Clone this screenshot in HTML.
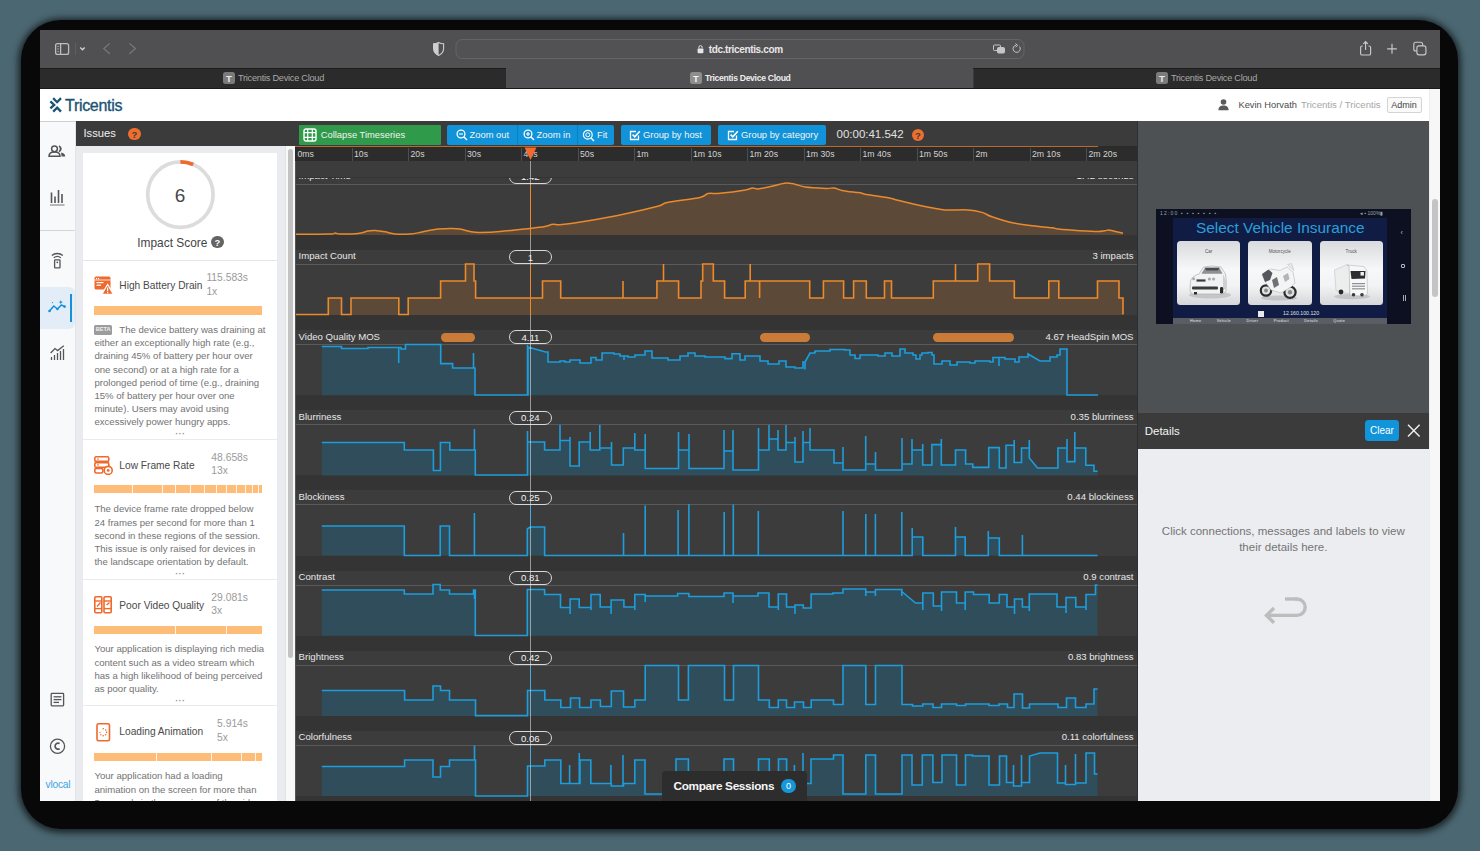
<!DOCTYPE html>
<html><head><meta charset="utf-8">
<style>
*{box-sizing:border-box;margin:0;padding:0}
html,body{width:1480px;height:851px;overflow:hidden}
body{background:#4b6771;position:relative;font-family:"Liberation Sans",sans-serif}
.a{position:absolute}
.t{position:absolute;white-space:nowrap;line-height:1}
#shadow{left:21px;top:20px;width:1437px;height:809px;background:#080808;border-radius:40px;box-shadow:0 1px 6px 3px rgba(0,0,0,.62)}
#win{left:40px;top:30px;width:1400px;height:771px;overflow:hidden;background:#3c3c3c}
</style></head>
<body>
<div id="shadow" class="a"></div>
<div id="win" class="a">
<!-- everything inside uses page coords via wrapper offset -->
<div class="a" style="left:-40px;top:-30px;width:1480px;height:851px">

<!-- browser toolbar -->
<div class="a" style="left:40px;top:30px;width:1400px;height:38px;background:#505052"></div>
<svg class="a" style="left:40px;top:30px" width="1400" height="38" viewBox="40 30 1400 38">
 <g fill="none" stroke="#bdbdbd" stroke-width="1.3">
  <rect x="55.6" y="43.6" width="13" height="10.8" rx="2"/>
  <line x1="60.6" y1="43.8" x2="60.6" y2="54.2"/>
 </g>
 <g stroke="#a8a8a8" stroke-width="0.9"><line x1="57.2" y1="46.4" x2="59" y2="46.4"/><line x1="57.2" y1="49" x2="59" y2="49"/><line x1="57.2" y1="51.6" x2="59" y2="51.6"/></g>
 <line x1="75.5" y1="43" x2="75.5" y2="55" stroke="#5e5e60" stroke-width="1"/>
 <path d="M80.3 47.6 L82.5 49.8 L84.7 47.6" fill="none" stroke="#d0d0d0" stroke-width="1.4"/>
 <path d="M109.8 43.4 L103.8 48.6 L109.8 53.8" fill="none" stroke="#7a7a7c" stroke-width="1.2"/>
 <path d="M129.4 43.4 L135.4 48.6 L129.4 53.8" fill="none" stroke="#7a7a7c" stroke-width="1.2"/>
 <path d="M438.6 42.5 C436.5 43.6 435 43.8 433.6 43.8 L433.6 48.5 C433.6 52 436 54.2 438.6 55.4 C441.2 54.2 443.6 52 443.6 48.5 L443.6 43.8 C442.2 43.8 440.7 43.6 438.6 42.5 Z" fill="none" stroke="#cfcfcf" stroke-width="1.1"/>
 <path d="M438.6 42.5 C436.5 43.6 435 43.8 433.6 43.8 L433.6 48.5 C433.6 52 436 54.2 438.6 55.4 Z" fill="#cfcfcf"/>
 <rect x="456" y="39.5" width="568" height="19" rx="6" fill="#525254" stroke="#69696b" stroke-width="0.8"/>
 <rect x="697.6" y="48.4" width="5.8" height="4.8" rx="0.8" fill="#e6e6e6"/>
 <path d="M698.9 48.4 V47.2 A1.6 1.6 0 0 1 702.1 47.2 V48.4" fill="none" stroke="#e6e6e6" stroke-width="1"/>
 <g fill="none" stroke="#c6c6c6" stroke-width="1">
  <rect x="993.5" y="45" width="7" height="5.5" rx="1"/>
  <rect x="997.5" y="47.5" width="7" height="5.5" rx="1" fill="#c6c6c6"/>
  <path d="M1019.5 46.5 A3.6 3.6 0 1 1 1016 45.2"/>
 </g>
 <path d="M1015.5 43.6 L1017.6 45.3 L1015.6 47" fill="none" stroke="#c6c6c6" stroke-width="1"/>
 <g fill="none" stroke="#c9c9c9" stroke-width="1.15">
  <path d="M1362.8 46 H1362.2 A1.6 1.6 0 0 0 1360.6 47.6 V53.4 A1.6 1.6 0 0 0 1362.2 55 H1369 A1.6 1.6 0 0 0 1370.6 53.4 V47.6 A1.6 1.6 0 0 0 1369 46 H1368.4"/>
  <path d="M1365.6 50 V41.8 M1363.4 44 L1365.6 41.6 L1367.8 44"/>
  <path d="M1392 43.8 V53.8 M1387.2 48.8 H1396.8"/>
  <rect x="1413.8" y="42.2" width="8.8" height="8.8" rx="2"/>
  <rect x="1416.9" y="45.8" width="9" height="9" rx="2" fill="#505052"/>
 </g>
</svg>
<div class="t" style="left:708.7px;top:44.6px;font-size:10px;letter-spacing:-0.35px;font-weight:bold;color:#e8e8e8">tdc.tricentis.com</div>
<!-- tab bar -->
<div class="a" style="left:40px;top:68px;width:1400px;height:21px;background:#2b2b2b;border-top:1px solid #1c1c1c;border-bottom:1px solid #1a1a1a"></div>
<div class="a" style="left:506px;top:68px;width:467px;height:20px;background:#505052"></div>
<div class="a" style="left:973px;top:69px;width:1px;height:19px;background:#3a3a3a"></div>
<div class="a" style="left:223px;top:72px;width:12px;height:12px;border-radius:2.5px;background:#7b7b7b"></div>
<div class="t" style="left:223px;top:74px;width:12px;text-align:center;font-size:9.5px;font-weight:bold;color:#eaeaea">T</div>
<div class="t" style="left:238px;top:74.2px;font-size:9.2px;letter-spacing:-0.25px;color:#a8a8a8">Tricentis Device Cloud</div>
<div class="a" style="left:690px;top:72px;width:12px;height:12px;border-radius:2.5px;background:#8e8e8e"></div>
<div class="t" style="left:690px;top:74px;width:12px;text-align:center;font-size:9.5px;font-weight:bold;color:#f2f2f2">T</div>
<div class="t" style="left:705px;top:74.2px;font-size:8.6px;letter-spacing:-0.3px;font-weight:bold;color:#ededed">Tricentis Device Cloud</div>
<div class="a" style="left:1156px;top:72px;width:12px;height:12px;border-radius:2.5px;background:#7b7b7b"></div>
<div class="t" style="left:1156px;top:74px;width:12px;text-align:center;font-size:9.5px;font-weight:bold;color:#eaeaea">T</div>
<div class="t" style="left:1171px;top:74.2px;font-size:9.2px;letter-spacing:-0.25px;color:#a8a8a8">Tricentis Device Cloud</div>


<!-- app header -->
<div class="a" style="left:40px;top:89px;width:1389px;height:32px;background:#ffffff"></div>
<div class="a" style="left:1429px;top:89px;width:11px;height:712px;background:#f7f7f8;border-left:1px solid #ececec"></div>
<div class="a" style="left:1432px;top:199px;width:6px;height:98px;border-radius:3px;background:#c4c4c6"></div>
<svg class="a" style="left:48px;top:96px" width="16" height="18" viewBox="0 0 16 18">
 <g fill="none" stroke="#1a5373" stroke-width="2.3" stroke-linecap="square" stroke-linejoin="miter">
 <path d="M6 3 L9.1 6.2 L12.2 3"/>
 <path d="M3.2 6.2 L6.2 8.9 L3.2 11.6"/>
 <path d="M6 14.8 L9.1 11.6 L12.2 14.8"/>
 </g>
</svg>
<div class="t" style="left:65px;top:97.5px;font-size:16px;color:#1a5373;letter-spacing:-0.3px;-webkit-text-stroke:0.35px #1a5373">Tricentis</div>
<svg class="a" style="left:1218px;top:99px" width="11" height="12" viewBox="0 0 11 12">
 <circle cx="5.5" cy="3" r="2.8" fill="#5a5a5a"/>
 <path d="M0.4 11.2 C0.4 7.6 2.6 6.4 5.5 6.4 C8.4 6.4 10.6 7.6 10.6 11.2 Z" fill="#5a5a5a"/>
</svg>
<div class="t" style="left:1238.5px;top:100.9px;font-size:9.3px;color:#4a4a4a">Kevin Horvath</div>
<div class="t" style="left:1301px;top:100px;font-size:9.6px;color:#a6a6a6">Tricentis / Tricentis</div>
<div class="a" style="left:1386.5px;top:96.5px;width:35px;height:16px;border:1px solid #d4d4d4;border-radius:2px;background:#fafafa"></div>
<div class="t" style="left:1386.5px;top:100.6px;width:35px;text-align:center;font-size:9.0px;color:#444">Admin</div>


<!-- left nav sidebar -->
<div class="a" style="left:40px;top:121px;width:36px;height:680px;background:#f8f9fa;border-right:1px solid #e4e5e8"></div>
<div class="a" style="left:40px;top:230px;width:35px;height:1px;background:#d3d5d8"></div>
<div class="a" style="left:40px;top:121px;width:36px;height:1px;background:#cfd0d2"></div>
<div class="a" style="left:40px;top:287px;width:34.5px;height:42px;border-radius:0 6px 6px 0;background:#e2edf8"></div>
<div class="a" style="left:70px;top:294px;width:2px;height:28px;background:#1790dc"></div>
<svg class="a" style="left:40px;top:121px" width="36" height="680" viewBox="40 121 36 680">
 <g fill="none" stroke="#555" stroke-width="1.5">
  <circle cx="54.5" cy="148.8" r="2.9"/>
  <path d="M49 156.2 C49 153.2 51.2 152 54.5 152 C57.8 152 60 153.2 60 156.2 Z"/>
 </g>
 <path d="M59 146 A2.9 2.9 0 0 1 59 151.6 A3.6 3.6 0 0 0 59 146 Z" fill="#555" stroke="#555" stroke-width="1.2"/>
 <path d="M61 152.4 C63.6 152.8 65.2 154 65.2 156.4 L61.6 156.4 Z" fill="#555"/>
 <g stroke="#555" stroke-width="1.6">
  <line x1="51.5" y1="192.5" x2="51.5" y2="203"/>
  <line x1="55" y1="196.5" x2="55" y2="203"/>
  <line x1="58.5" y1="190" x2="58.5" y2="203"/>
  <line x1="62" y1="194" x2="62" y2="203"/>
 </g>
 <line x1="50" y1="205" x2="64.5" y2="205" stroke="#777" stroke-width="1"/>
 <g fill="none" stroke="#555" stroke-width="1.3">
  <path d="M51.8 255.6 A8.2 8.2 0 0 1 62.8 255.6"/>
  <path d="M53.8 257.8 A5.4 5.4 0 0 1 60.8 257.8"/>
  <rect x="54.6" y="259.8" width="5.4" height="8" rx="0.6"/>
 </g>
 <circle cx="57.3" cy="262.3" r="0.9" fill="#555"/>
 <g fill="none" stroke="#1a8fde" stroke-width="1.6" stroke-linejoin="round">
  <path d="M49.5 311 L53.8 306 L57.4 309 L61.4 305 L64.6 306.6"/>
 </g>
 <g fill="#1a8fde">
  <circle cx="49.5" cy="311" r="1.3"/><circle cx="57.4" cy="309" r="1.3"/><circle cx="64.6" cy="306.6" r="1.3"/>
  <path d="M60.8 300 l0.6 1.6 l1.6 0.6 l-1.6 0.6 l-0.6 1.6 l-0.6 -1.6 l-1.6 -0.6 l1.6 -0.6 Z"/>
  <circle cx="52.5" cy="302.6" r="0.7"/>
 </g>
 <g stroke="#555" stroke-width="1.3">
  <line x1="51.5" y1="357" x2="51.5" y2="360"/>
  <line x1="54.5" y1="355" x2="54.5" y2="360"/>
  <line x1="57.5" y1="353" x2="57.5" y2="360"/>
  <line x1="60.5" y1="351" x2="60.5" y2="360"/>
  <line x1="63.5" y1="349" x2="63.5" y2="360"/>
 </g>
 <path d="M50.6 353 L55 348.6 L57.6 350.6 L63.8 345.8" fill="none" stroke="#555" stroke-width="1.3"/>
 <g fill="none" stroke="#555" stroke-width="1.3">
  <rect x="51.2" y="693.4" width="12.4" height="12.4" rx="0.8"/>
  <line x1="53.6" y1="696.8" x2="61.4" y2="696.8"/>
  <line x1="53.6" y1="699.6" x2="61.4" y2="699.6"/>
  <line x1="53.6" y1="702.4" x2="59" y2="702.4"/>
  <circle cx="57.5" cy="746.2" r="7.1"/>
 </g>
 <path d="M59.6 743.6 A3 3 0 1 0 59.6 748.8" fill="none" stroke="#555" stroke-width="1.7"/>
</svg>
<div class="t" style="left:45.5px;top:779.5px;font-size:10.2px;color:#3ba3e4;letter-spacing:-0.2px">vlocal</div>

<!-- issues panel -->
<div class="a" style="left:76px;top:121px;width:1062px;height:25.5px;background:#3b3b3b"></div>
<div class="t" style="left:83.5px;top:128px;font-size:11.2px;color:#f0f0f0">Issues</div>
<div class="a" style="left:128.2px;top:127.5px;width:12.6px;height:12.6px;border-radius:50%;background:#ee6f2d"></div>
<div class="t" style="left:128.2px;top:129.6px;width:12.6px;text-align:center;font-size:9.4px;font-weight:bold;color:#3b3b3b">?</div>
<div class="a" style="left:76px;top:146px;width:219px;height:655px;background:#e9ebef"></div>
<div class="a" style="left:284.5px;top:146px;width:10.5px;height:655px;background:#f8f8f8;border-left:1px solid #e2e2e2"></div>
<div class="a" style="left:287.5px;top:148.5px;width:5px;height:509px;border-radius:2.5px;background:#c3c3c3"></div>
<div class="a" style="left:83.4px;top:153px;width:193.6px;height:648px;background:#ffffff"></div>
<svg class="a" style="left:140px;top:154px" width="80" height="80" viewBox="140 154 80 80">
 <circle cx="180.4" cy="194.6" r="32.7" fill="none" stroke="#dcdcdc" stroke-width="3.7"/>
 <path d="M180.4 161.9 A32.7 32.7 0 0 1 193.2 164.5" fill="none" stroke="#ef6a2c" stroke-width="3.9"/>
</svg>
<div class="t" style="left:160px;top:185.5px;width:40px;text-align:center;font-size:19px;color:#474747">6</div>
<div class="t" style="left:137.3px;top:237.6px;font-size:11.9px;color:#444">Impact Score</div>
<div class="a" style="left:211px;top:235.8px;width:12.6px;height:12.6px;border-radius:50%;background:#646464"></div>
<div class="t" style="left:211px;top:238px;width:12.6px;text-align:center;font-size:9.4px;font-weight:bold;color:#fff">?</div>
<div class="a" style="left:83.4px;top:259.5px;width:193.6px;height:1px;background:#e3e6ea"></div>
<svg class="a" style="left:94.4px;top:275.5px" width="20" height="19" viewBox="0 0 20 19"><rect x="0.5" y="0.5" width="16" height="13" rx="1.6" fill="#ee6a2c"/><rect x="2" y="2" width="1.2" height="1.2" fill="#fff"/><rect x="4" y="2" width="1.2" height="1.2" fill="#fff"/>
 <rect x="0.5" y="3.6" width="16" height="0.8" fill="#fff"/><rect x="2.5" y="6" width="7" height="1.2" fill="#fff"/><rect x="2.5" y="8.6" width="4.5" height="1.2" fill="#fff"/>
 <path d="M13.6 8.4 L19.4 18.4 L7.8 18.4 Z" fill="#ee6a2c" stroke="#fff" stroke-width="1.2"/><rect x="13" y="11.6" width="1.2" height="3.6" fill="#fff"/><rect x="13" y="16" width="1.2" height="1.2" fill="#fff"/></svg>
<div class="t" style="left:119.3px;top:281.1px;font-size:10.2px;color:#4a4a4a;">High Battery Drain</div>
<div class="a" style="left:150px;top:271.2px;width:98px;text-align:right;line-height:1"><div style="display:inline-block;text-align:left;font-size:10.3px;color:#9a9a9a;line-height:13.6px">115.583s<br>1x</div></div>
<div class="a" style="left:94.4px;top:305.5px;width:167.3px;height:9.1px;background:#fdbc78"></div>
<div class="a" style="left:94.4px;top:325.2px;width:17.6px;height:9.4px;border-radius:1.5px;background:#9c9c9c"></div>
<div class="t" style="left:94.4px;top:327.0px;width:17.6px;text-align:center;font-size:5.6px;font-weight:bold;color:#eee">BETA</div>
<div class="t" style="left:119.3px;top:325.0px;font-size:9.6px;color:#737373;">The device battery was draining at</div>
<div class="t" style="left:94.4px;top:338.2px;font-size:9.6px;color:#737373;">either an exceptionally high rate (e.g.,</div>
<div class="t" style="left:94.4px;top:351.3px;font-size:9.6px;color:#737373;">draining 45% of battery per hour over</div>
<div class="t" style="left:94.4px;top:364.5px;font-size:9.6px;color:#737373;">one second) or at a high rate for a</div>
<div class="t" style="left:94.4px;top:377.6px;font-size:9.6px;color:#737373;">prolonged period of time (e.g., draining</div>
<div class="t" style="left:94.4px;top:390.8px;font-size:9.6px;color:#737373;">15% of battery per hour over one</div>
<div class="t" style="left:94.4px;top:403.9px;font-size:9.6px;color:#737373;">minute). Users may avoid using</div>
<div class="t" style="left:94.4px;top:417.1px;font-size:9.6px;color:#737373;">excessively power hungry apps.</div>
<div class="t" style="left:175.2px;top:430.0px;font-size:9.0px;color:#9a9a9a;font-weight:bold;letter-spacing:0.4px">&middot;&middot;&middot;</div>
<div class="a" style="left:83.4px;top:438.5px;width:193.6px;height:1px;background:#e8eaee"></div>
<svg class="a" style="left:94.4px;top:455.5px" width="20" height="19" viewBox="0 0 20 19"><rect x="0.8" y="0.8" width="14" height="4.6" rx="1.4" fill="none" stroke="#ee6a2c" stroke-width="1.6"/><rect x="0.8" y="6.6" width="14" height="4.6" rx="1.4" fill="none" stroke="#ee6a2c" stroke-width="1.6"/><rect x="0.8" y="12.4" width="8" height="4.6" rx="1.4" fill="none" stroke="#ee6a2c" stroke-width="1.6"/>
 <rect x="3" y="2.6" width="2" height="1" fill="#ee6a2c"/><rect x="3" y="8.4" width="2" height="1" fill="#ee6a2c"/><circle cx="14.2" cy="14.4" r="4" fill="#fff" stroke="#ee6a2c" stroke-width="1.6"/><circle cx="14.2" cy="14.4" r="1.4" fill="#ee6a2c"/></svg>
<div class="t" style="left:119.3px;top:461.1px;font-size:10.2px;color:#4a4a4a;">Low Frame Rate</div>
<div class="a" style="left:150px;top:450.7px;width:98px;text-align:right;line-height:1"><div style="display:inline-block;text-align:left;font-size:10.3px;color:#9a9a9a;line-height:13.6px">48.658s<br>13x</div></div>
<div class="a" style="left:94.4px;top:485.4px;width:167.3px;height:8.1px;background:#fdbc78"></div>
<div class="a" style="left:132.0px;top:485.4px;width:1px;height:8.1px;background:#fff3e6"></div>
<div class="a" style="left:161.7px;top:485.4px;width:1px;height:8.1px;background:#fff3e6"></div>
<div class="a" style="left:175.4px;top:485.4px;width:1px;height:8.1px;background:#fff3e6"></div>
<div class="a" style="left:190.2px;top:485.4px;width:1px;height:8.1px;background:#fff3e6"></div>
<div class="a" style="left:204.0px;top:485.4px;width:1px;height:8.1px;background:#fff3e6"></div>
<div class="a" style="left:216.0px;top:485.4px;width:1px;height:8.1px;background:#fff3e6"></div>
<div class="a" style="left:226.2px;top:485.4px;width:1px;height:8.1px;background:#fff3e6"></div>
<div class="a" style="left:235.7px;top:485.4px;width:1px;height:8.1px;background:#fff3e6"></div>
<div class="a" style="left:244.8px;top:485.4px;width:1px;height:8.1px;background:#fff3e6"></div>
<div class="a" style="left:251.6px;top:485.4px;width:1px;height:8.1px;background:#fff3e6"></div>
<div class="a" style="left:258.4px;top:485.4px;width:1px;height:8.1px;background:#fff3e6"></div>
<div class="t" style="left:94.4px;top:504.3px;font-size:9.6px;color:#737373;">The device frame rate dropped below</div>
<div class="t" style="left:94.4px;top:517.5px;font-size:9.6px;color:#737373;">24 frames per second for more than 1</div>
<div class="t" style="left:94.4px;top:530.6px;font-size:9.6px;color:#737373;">second in these regions of the session.</div>
<div class="t" style="left:94.4px;top:543.8px;font-size:9.6px;color:#737373;">This issue is only raised for devices in</div>
<div class="t" style="left:94.4px;top:556.9px;font-size:9.6px;color:#737373;">the landscape orientation by default.</div>
<div class="t" style="left:175.2px;top:570.3px;font-size:9.0px;color:#9a9a9a;font-weight:bold;letter-spacing:0.4px">&middot;&middot;&middot;</div>
<div class="a" style="left:83.4px;top:578.7px;width:193.6px;height:1px;background:#e8eaee"></div>
<svg class="a" style="left:94.4px;top:596.0px" width="20" height="19" viewBox="0 0 20 19"><rect x="0.8" y="0.8" width="7" height="16" rx="1" fill="none" stroke="#ee6a2c" stroke-width="1.6"/><rect x="10" y="0.8" width="7.2" height="16" rx="1" fill="none" stroke="#ee6a2c" stroke-width="1.6"/>
 <line x1="0.8" y1="5" x2="7.8" y2="5" stroke="#ee6a2c" stroke-width="1.4"/><line x1="0.8" y1="12.6" x2="7.8" y2="12.6" stroke="#ee6a2c" stroke-width="1.4"/><line x1="10" y1="5" x2="17.2" y2="5" stroke="#ee6a2c" stroke-width="1.4"/><line x1="10" y1="12.6" x2="17.2" y2="12.6" stroke="#ee6a2c" stroke-width="1.4"/>
 <path d="M3 10.5 L6.5 6.5 M12.5 9 L15.5 6.5" stroke="#ee6a2c" stroke-width="1.4"/></svg>
<div class="t" style="left:119.3px;top:600.7px;font-size:10.2px;color:#4a4a4a;">Poor Video Quality</div>
<div class="a" style="left:150px;top:590.9px;width:98px;text-align:right;line-height:1"><div style="display:inline-block;text-align:left;font-size:10.3px;color:#9a9a9a;line-height:13.6px">29.081s<br>3x</div></div>
<div class="a" style="left:94.4px;top:625.5px;width:167.3px;height:8.2px;background:#fdbc78"></div>
<div class="a" style="left:175.2px;top:625.5px;width:1px;height:8.2px;background:#fff3e6"></div>
<div class="a" style="left:226.3px;top:625.5px;width:1px;height:8.2px;background:#fff3e6"></div>
<div class="t" style="left:94.4px;top:644.4px;font-size:9.6px;color:#737373;">Your application is displaying rich media</div>
<div class="t" style="left:94.4px;top:657.6px;font-size:9.6px;color:#737373;">content such as a video stream which</div>
<div class="t" style="left:94.4px;top:670.7px;font-size:9.6px;color:#737373;">has a high likelihood of being perceived</div>
<div class="t" style="left:94.4px;top:683.9px;font-size:9.6px;color:#737373;">as poor quality.</div>
<div class="t" style="left:175.2px;top:696.9px;font-size:9.0px;color:#9a9a9a;font-weight:bold;letter-spacing:0.4px">&middot;&middot;&middot;</div>
<div class="a" style="left:83.4px;top:705.0px;width:193.6px;height:1px;background:#e8eaee"></div>
<svg class="a" style="left:96.0px;top:722.5px" width="20" height="19" viewBox="0 0 20 19"><rect x="1" y="0.8" width="12.5" height="17" rx="1.6" fill="none" stroke="#ee6a2c" stroke-width="1.6"/>
 <g fill="#ee6a2c"><circle cx="7.2" cy="5.8" r="0.8"/><circle cx="9.8" cy="7" r="0.8"/><circle cx="10.6" cy="9.4" r="0.8"/><circle cx="9.6" cy="11.8" r="0.8"/><circle cx="7.2" cy="12.8" r="0.8"/><circle cx="4.8" cy="11.8" r="0.7"/><circle cx="3.9" cy="9.4" r="0.6"/></g></svg>
<div class="t" style="left:119.3px;top:727.4px;font-size:10.2px;color:#4a4a4a;">Loading Animation</div>
<div class="a" style="left:150px;top:717.2px;width:98px;text-align:right;line-height:1"><div style="display:inline-block;text-align:left;font-size:10.3px;color:#9a9a9a;line-height:13.6px">5.914s<br>5x</div></div>
<div class="a" style="left:94.4px;top:752.5px;width:167.3px;height:8.5px;background:#fdbc78"></div>
<div class="a" style="left:156.2px;top:752.5px;width:1px;height:8.5px;background:#fff3e6"></div>
<div class="a" style="left:211.4px;top:752.5px;width:1px;height:8.5px;background:#fff3e6"></div>
<div class="a" style="left:240.5px;top:752.5px;width:1px;height:8.5px;background:#fff3e6"></div>
<div class="a" style="left:254.6px;top:752.5px;width:1px;height:8.5px;background:#fff3e6"></div>
<div class="t" style="left:94.4px;top:771.4px;font-size:9.6px;color:#737373;">Your application had a loading</div>
<div class="t" style="left:94.4px;top:784.6px;font-size:9.6px;color:#737373;">animation on the screen for more than</div>
<div class="t" style="left:94.4px;top:797.7px;font-size:9.6px;color:#737373;">5 seconds in these regions of the video.</div>


<div class="a" style="left:299px;top:125.2px;width:142px;height:19.6px;border-radius:1px;background:#2f9a49"></div>
<svg class="a" style="left:303px;top:128px" width="14" height="14" viewBox="0 0 14 14"><rect x="1" y="1" width="12" height="12" rx="2" fill="none" stroke="#fff" stroke-width="1.4"/><path d="M4.7 1 V13 M9.3 1 V13 M1 4.7 H13 M1 9.3 H13" stroke="#fff" stroke-width="1.2"/></svg>
<div class="t" style="left:320.7px;top:130.3px;font-size:9.4px;color:#f2f2f2;">Collapse Timeseries</div>
<div class="a" style="left:446.8px;top:125.2px;width:167.2px;height:19.6px;border-radius:2px;background:#1093d8"></div>
<div class="a" style="left:516.5px;top:125.2px;width:1px;height:19.6px;background:#0d7fbd"></div>
<div class="a" style="left:576.6px;top:125.2px;width:1px;height:19.6px;background:#0d7fbd"></div>
<svg class="a" style="left:455.5px;top:129px" width="12" height="12" viewBox="0 0 12 12"><circle cx="5" cy="5" r="3.9" fill="none" stroke="#fff" stroke-width="1.3"/><path d="M7.8 7.8 L11 11" stroke="#fff" stroke-width="1.5"/><path d="M3 5 H7" stroke="#fff" stroke-width="1.1"/></svg>
<div class="t" style="left:469.5px;top:130.3px;font-size:9.4px;color:#f4f4f4;">Zoom out</div>
<svg class="a" style="left:522.5px;top:129px" width="12" height="12" viewBox="0 0 12 12"><circle cx="5" cy="5" r="3.9" fill="none" stroke="#fff" stroke-width="1.3"/><path d="M7.8 7.8 L11 11" stroke="#fff" stroke-width="1.5"/><path d="M3 5 H7 M5 3 V7" stroke="#fff" stroke-width="1.1"/></svg>
<div class="t" style="left:536.5px;top:130.3px;font-size:9.4px;color:#f4f4f4;">Zoom in</div>
<svg class="a" style="left:582px;top:128.5px" width="13" height="13" viewBox="0 0 13 13"><circle cx="5.8" cy="5.8" r="4.4" fill="none" stroke="#fff" stroke-width="1.2"/><circle cx="5.8" cy="5.8" r="2" fill="none" stroke="#fff" stroke-width="1"/><path d="M9 9 L12 12" stroke="#fff" stroke-width="1.4"/></svg>
<div class="t" style="left:597.0px;top:130.3px;font-size:9.4px;color:#f4f4f4;">Fit</div>
<div class="a" style="left:620.6px;top:125.2px;width:90.4px;height:19.6px;border-radius:2px;background:#1093d8"></div>
<svg class="a" style="left:628.5px;top:129px" width="12" height="12" viewBox="0 0 12 12"><path d="M9.5 6.5 V10.5 H1.5 V2.5 H7" fill="none" stroke="#fff" stroke-width="1.3"/><path d="M3.6 5.6 L5.8 7.8 L10.8 2.2" fill="none" stroke="#fff" stroke-width="1.6"/></svg>
<div class="t" style="left:643.0px;top:130.3px;font-size:9.4px;color:#f4f4f4;">Group by host</div>
<div class="a" style="left:718.2px;top:125.2px;width:108.3px;height:19.6px;border-radius:2px;background:#1093d8"></div>
<svg class="a" style="left:726.5px;top:129px" width="12" height="12" viewBox="0 0 12 12"><path d="M9.5 6.5 V10.5 H1.5 V2.5 H7" fill="none" stroke="#fff" stroke-width="1.3"/><path d="M3.6 5.6 L5.8 7.8 L10.8 2.2" fill="none" stroke="#fff" stroke-width="1.6"/></svg>
<div class="t" style="left:741.0px;top:130.3px;font-size:9.4px;color:#f4f4f4;">Group by category</div>
<div class="t" style="left:836.5px;top:129.3px;font-size:11.5px;color:#e2e2e2;">00:00:41.542</div>
<div class="a" style="left:911.7px;top:128.6px;width:12.6px;height:12.6px;border-radius:50%;background:#ee6f2d"></div>
<div class="t" style="left:911.7px;top:130.7px;width:12.6px;text-align:center;font-size:9.4px;font-weight:bold;color:#3b3b3b">?</div>
<div class="a" style="left:295px;top:146px;width:843px;height:655px;background:#3c3c3c"></div>
<div class="a" style="left:295px;top:234.9px;width:843px;height:15.0px;background:#343434"></div>
<div class="a" style="left:295px;top:315.1px;width:843px;height:15.0px;background:#343434"></div>
<div class="a" style="left:295px;top:395.2px;width:843px;height:15.0px;background:#343434"></div>
<div class="a" style="left:295px;top:475.4px;width:843px;height:15.0px;background:#343434"></div>
<div class="a" style="left:295px;top:555.6px;width:843px;height:15.0px;background:#343434"></div>
<div class="a" style="left:295px;top:635.8px;width:843px;height:15.0px;background:#343434"></div>
<div class="a" style="left:295px;top:715.9px;width:843px;height:15.0px;background:#343434"></div>
<div class="a" style="left:295px;top:796.1px;width:843px;height:15.0px;background:#343434"></div>
<div class="a" style="left:295px;top:183.7px;width:843px;height:1px;background:#5a5a5a"></div>
<div class="a" style="left:295px;top:263.9px;width:843px;height:1px;background:#5a5a5a"></div>
<div class="a" style="left:295px;top:344.0px;width:843px;height:1px;background:#5a5a5a"></div>
<div class="a" style="left:295px;top:424.2px;width:843px;height:1px;background:#5a5a5a"></div>
<div class="a" style="left:295px;top:504.4px;width:843px;height:1px;background:#5a5a5a"></div>
<div class="a" style="left:295px;top:584.5px;width:843px;height:1px;background:#5a5a5a"></div>
<div class="a" style="left:295px;top:664.7px;width:843px;height:1px;background:#5a5a5a"></div>
<div class="a" style="left:295px;top:744.9px;width:843px;height:1px;background:#5a5a5a"></div>
<svg class="a" style="left:295px;top:146px" width="843" height="655" viewBox="295 146 843 655">
<path d="M295 234.2 C300.8 234.2 323.3 234.2 330 234 C336.7 233.8 333.3 233 335 233 C336.7 233 336.2 233.9 340 234 C343.8 234.1 353.3 234 358 233.5 C362.7 233 365.2 231.5 368 231 C370.8 230.5 372.2 230.4 375 230.5 C377.8 230.6 381.7 231.2 385 231.8 C388.3 232.4 390.8 233.6 395 234 C399.2 234.4 405.5 234.3 410 234 C414.5 233.7 417.8 232.8 422 232 C426.2 231.2 430.3 230 435 229.4 C439.7 228.8 445.8 228.6 450 228.5 C454.2 228.4 456.5 228.4 460 229 C463.5 229.6 467.7 231.2 471 231.8 C474.3 232.4 475.2 232.6 480 232.5 C484.8 232.4 491.7 232.2 500 231.5 C508.3 230.8 522.5 229.2 530 228.4 C537.5 227.6 541.2 227.2 545 226.5 C548.8 225.8 550.2 224.5 553 224.2 C555.8 223.9 555.8 225.2 562 224.6 C568.2 224 580.3 222.1 590 220.5 C599.7 218.9 608.7 217.4 620 215 C631.3 212.6 649.9 208.4 657.8 206.3 C665.7 204.2 660.3 204 667.3 202.5 C674.3 201 693.2 198.9 700 197.4 C706.8 195.9 704.7 194.3 708 193.6 C711.3 192.9 713.8 193.9 720 193.3 C726.2 192.7 740.1 190.8 745.5 189.9 C750.9 189 750.3 188.2 752.4 188 C754.5 187.8 754.9 189.1 758 188.9 C761.1 188.7 766.4 187.6 770.8 186.6 C775.2 185.6 780.6 183.6 784.6 183.2 C788.6 182.8 791.5 183.6 795 184.2 C798.5 184.8 800.2 186.3 805.4 187 C810.6 187.7 821.3 188.2 826 188.4 C830.7 188.6 831.1 187.7 833.8 188 C836.5 188.3 838.5 189.7 842 190.4 C845.5 191.1 852 191.9 855 192.3 C858 192.7 858.6 192.4 860.3 192.7 C862 193 861.7 193.5 865 194.2 C868.3 194.8 876.3 196 880 196.6 C883.7 197.2 882.8 196.7 887 197.6 C891.2 198.5 897.8 200.3 905 202 C912.2 203.7 923.3 206.2 930 207.5 C936.7 208.8 938.7 209.5 945 209.9 C951.3 210.3 961.8 209.5 968 209.9 C974.2 210.3 978 211.2 982 212.4 C986 213.6 987.3 215.2 992 216.8 C996.7 218.4 1003.7 220.7 1010 222.2 C1016.3 223.7 1023 224.7 1030 225.6 C1037 226.5 1047.3 227.2 1052 227.8 C1056.7 228.4 1053.3 228.5 1058 229 C1062.7 229.5 1073.3 230.3 1080 230.7 C1086.7 231.1 1093.8 231.5 1098 231.5 C1102.2 231.5 1103 230.9 1105 230.7 C1107 230.5 1107 229.8 1110 230.2 C1113 230.6 1120.8 232.7 1123 233.2 L1123 234.9 L295 234.9 Z" fill="#5d4938"/><path d="M295 234.2 C300.8 234.2 323.3 234.2 330 234 C336.7 233.8 333.3 233 335 233 C336.7 233 336.2 233.9 340 234 C343.8 234.1 353.3 234 358 233.5 C362.7 233 365.2 231.5 368 231 C370.8 230.5 372.2 230.4 375 230.5 C377.8 230.6 381.7 231.2 385 231.8 C388.3 232.4 390.8 233.6 395 234 C399.2 234.4 405.5 234.3 410 234 C414.5 233.7 417.8 232.8 422 232 C426.2 231.2 430.3 230 435 229.4 C439.7 228.8 445.8 228.6 450 228.5 C454.2 228.4 456.5 228.4 460 229 C463.5 229.6 467.7 231.2 471 231.8 C474.3 232.4 475.2 232.6 480 232.5 C484.8 232.4 491.7 232.2 500 231.5 C508.3 230.8 522.5 229.2 530 228.4 C537.5 227.6 541.2 227.2 545 226.5 C548.8 225.8 550.2 224.5 553 224.2 C555.8 223.9 555.8 225.2 562 224.6 C568.2 224 580.3 222.1 590 220.5 C599.7 218.9 608.7 217.4 620 215 C631.3 212.6 649.9 208.4 657.8 206.3 C665.7 204.2 660.3 204 667.3 202.5 C674.3 201 693.2 198.9 700 197.4 C706.8 195.9 704.7 194.3 708 193.6 C711.3 192.9 713.8 193.9 720 193.3 C726.2 192.7 740.1 190.8 745.5 189.9 C750.9 189 750.3 188.2 752.4 188 C754.5 187.8 754.9 189.1 758 188.9 C761.1 188.7 766.4 187.6 770.8 186.6 C775.2 185.6 780.6 183.6 784.6 183.2 C788.6 182.8 791.5 183.6 795 184.2 C798.5 184.8 800.2 186.3 805.4 187 C810.6 187.7 821.3 188.2 826 188.4 C830.7 188.6 831.1 187.7 833.8 188 C836.5 188.3 838.5 189.7 842 190.4 C845.5 191.1 852 191.9 855 192.3 C858 192.7 858.6 192.4 860.3 192.7 C862 193 861.7 193.5 865 194.2 C868.3 194.8 876.3 196 880 196.6 C883.7 197.2 882.8 196.7 887 197.6 C891.2 198.5 897.8 200.3 905 202 C912.2 203.7 923.3 206.2 930 207.5 C936.7 208.8 938.7 209.5 945 209.9 C951.3 210.3 961.8 209.5 968 209.9 C974.2 210.3 978 211.2 982 212.4 C986 213.6 987.3 215.2 992 216.8 C996.7 218.4 1003.7 220.7 1010 222.2 C1016.3 223.7 1023 224.7 1030 225.6 C1037 226.5 1047.3 227.2 1052 227.8 C1056.7 228.4 1053.3 228.5 1058 229 C1062.7 229.5 1073.3 230.3 1080 230.7 C1086.7 231.1 1093.8 231.5 1098 231.5 C1102.2 231.5 1103 230.9 1105 230.7 C1107 230.5 1107 229.8 1110 230.2 C1113 230.6 1120.8 232.7 1123 233.2" fill="none" stroke="#ea8a2b" stroke-width="1.5"/>
<path d="M295 315.1 L295 314.5 H328.3 V298 H341.5 V314.5 H351 V298 H398.8 V314.5 H408.2 V298 H440.6 V281 H465.5 V264 H474 V281 H475.6 V298 H542.5 V281 H560.7 V298 H623 V281 V298 H656.9 V281 H663.5 V264 V281 H678.6 V298 H701 V281 H702.7 V264 H713.3 V281 H724.6 V298 H745.2 V281 H750.2 V264 V281 H759.6 V298 V281 H809.7 V298 H823.4 V281 H843.6 V298 H853.6 V281 H866.3 V298 H884.5 V281 H891.5 V298 H933.3 V281 H955.5 V264 V281 H977.7 V264 H989.6 V281 H1014.3 V298 H1048.8 V281 H1058.8 V298 H1097.5 V281 H1119 V298 H1123 V314.5 H1123 V315.1 Z" fill="#5d4938"/><path d="M295 314.5 H328.3 V298 H341.5 V314.5 H351 V298 H398.8 V314.5 H408.2 V298 H440.6 V281 H465.5 V264 H474 V281 H475.6 V298 H542.5 V281 H560.7 V298 H623 V281 V298 H656.9 V281 H663.5 V264 V281 H678.6 V298 H701 V281 H702.7 V264 H713.3 V281 H724.6 V298 H745.2 V281 H750.2 V264 V281 H759.6 V298 V281 H809.7 V298 H823.4 V281 H843.6 V298 H853.6 V281 H866.3 V298 H884.5 V281 H891.5 V298 H933.3 V281 H955.5 V264 V281 H977.7 V264 H989.6 V281 H1014.3 V298 H1048.8 V281 H1058.8 V298 H1097.5 V281 H1119 V298 H1123 V314.5" fill="none" stroke="#ea8a2b" stroke-width="1.6" stroke-linejoin="miter"/>
<path d="M321.8 395.2 L321.8 346.5 H341.5 V348.5 H368 V347.5 H398.7 V363 V347.5 H401 V349 H405.5 V344.5 H440.7 V363.6 H452.6 V368 H473.5 V353 V368 H475 V395 H527.5 V345 V395 H528 V347 L545.5 352 H548 V362 H560 V361 H565 V362 H570 V360 H580 V363 H591 V357.5 H596 V360 H602 V353 H614 V354 H620 V356 H624 V360 V356 H628 V357 H635 V355 H645 V351 H652 V358 H668 V360 H680 V356 H688 V353 H695 V356 H705 V357 H725 V358.6 H732 V353.8 H740 V360 H745 V356 H760 V361 H768 V364 H779 V361 H786 V367 H795 V368 H803 V362 H805 V369.5 V362 L810 353 H815 V351 H830 V349.5 H845 V350 H850 V355 H855 V358.5 H860 V355 H878 V356 H885 V353 H892 V356 H900 V349 H905 V353 H913 V355 H916 V359 H920 V355 H922 V353 H928 V352.5 H932 V355 H934 V364 H942 V361 H950 V365 H957 V362 H970 V363 H975 V361 H990 V362 H993 V357.5 H999 V366 V357.5 H1005 V359 H1015 V362 H1019 V357 H1028 V354 L1040 361 H1050 V357 H1057 V355 H1060 V349 H1067 V395 H1098 V395 H1098 V395.2 Z" fill="#2f4d5b"/><path d="M321.8 346.5 H341.5 V348.5 H368 V347.5 H398.7 V363 V347.5 H401 V349 H405.5 V344.5 H440.7 V363.6 H452.6 V368 H473.5 V353 V368 H475 V395 H527.5 V345 V395 H528 V347 L545.5 352 H548 V362 H560 V361 H565 V362 H570 V360 H580 V363 H591 V357.5 H596 V360 H602 V353 H614 V354 H620 V356 H624 V360 V356 H628 V357 H635 V355 H645 V351 H652 V358 H668 V360 H680 V356 H688 V353 H695 V356 H705 V357 H725 V358.6 H732 V353.8 H740 V360 H745 V356 H760 V361 H768 V364 H779 V361 H786 V367 H795 V368 H803 V362 H805 V369.5 V362 L810 353 H815 V351 H830 V349.5 H845 V350 H850 V355 H855 V358.5 H860 V355 H878 V356 H885 V353 H892 V356 H900 V349 H905 V353 H913 V355 H916 V359 H920 V355 H922 V353 H928 V352.5 H932 V355 H934 V364 H942 V361 H950 V365 H957 V362 H970 V363 H975 V361 H990 V362 H993 V357.5 H999 V366 V357.5 H1005 V359 H1015 V362 H1019 V357 H1028 V354 L1040 361 H1050 V357 H1057 V355 H1060 V349 H1067 V395 H1098 V395" fill="none" stroke="#1c9ddc" stroke-width="1.6" stroke-linejoin="miter"/>
<path d="M321.8 475.4 L321.8 442.5 H404.3 V450 H433.4 V470.5 H440.4 V442.5 H449.8 V450 H474.4 V429 V450 H475.3 V475 H527.5 V431 V475 H527.5 V442 H544.6 V450 H560 V425 V450 H560 V440.5 H570 V437 V440.5 H570 V466 H579.2 V442 H590.2 V432 V442 H590.2 V450 H599.8 V425 V450 H599.8 V448 H611.5 V442 V448 H611.5 V465 H623.3 V448 H634.8 V433 V448 H634.8 V450 H645.2 V434 V450 H645.2 V468.5 H678.5 V432 V468.5 H678.5 V450 H689 V434 V450 H689 V468.5 H724 V430 V468.5 H724 V451 H733 V430 V451 H733 V470 H758.5 V428 V470 H758.5 V450 H769 V425 V450 H769 V439 H778 V430 V439 H778 V450 H786 V425 V450 H786 V442.5 H795 V437 V442.5 H795 V462 H803 V431 V462 H803 V442.5 H810 V428 V442.5 H810 V450 H834 V463 H843 V447 V463 H843 V470 H865.7 V436 V470 H865.7 V464 H875.5 V452 V464 H875.5 V470 H902 V438 V470 H902 V464 H912 V439 V464 H912 V450 H922.7 V444 V450 H922.7 V465 H931.9 V444.6 H941.3 V439 V444.6 H941.3 V465 H955.5 V450 H965.6 V464 H972.8 V467.4 H988.7 V447.6 H999.3 V468 H1006 V445.2 H1014.2 V440 V445.2 H1014.2 V462.5 H1021.5 V448 H1029.3 V440 V448 H1029.3 V458 L1037.5 468 H1057.9 V448 H1067 V439 V448 H1067 V461.6 H1074.8 V432 V461.6 H1074.8 V448 H1085.8 V465.3 H1094 V471.3 H1097.6 V471.3 H1097.6 V475.4 Z" fill="#2f4d5b"/><path d="M321.8 442.5 H404.3 V450 H433.4 V470.5 H440.4 V442.5 H449.8 V450 H474.4 V429 V450 H475.3 V475 H527.5 V431 V475 H527.5 V442 H544.6 V450 H560 V425 V450 H560 V440.5 H570 V437 V440.5 H570 V466 H579.2 V442 H590.2 V432 V442 H590.2 V450 H599.8 V425 V450 H599.8 V448 H611.5 V442 V448 H611.5 V465 H623.3 V448 H634.8 V433 V448 H634.8 V450 H645.2 V434 V450 H645.2 V468.5 H678.5 V432 V468.5 H678.5 V450 H689 V434 V450 H689 V468.5 H724 V430 V468.5 H724 V451 H733 V430 V451 H733 V470 H758.5 V428 V470 H758.5 V450 H769 V425 V450 H769 V439 H778 V430 V439 H778 V450 H786 V425 V450 H786 V442.5 H795 V437 V442.5 H795 V462 H803 V431 V462 H803 V442.5 H810 V428 V442.5 H810 V450 H834 V463 H843 V447 V463 H843 V470 H865.7 V436 V470 H865.7 V464 H875.5 V452 V464 H875.5 V470 H902 V438 V470 H902 V464 H912 V439 V464 H912 V450 H922.7 V444 V450 H922.7 V465 H931.9 V444.6 H941.3 V439 V444.6 H941.3 V465 H955.5 V450 H965.6 V464 H972.8 V467.4 H988.7 V447.6 H999.3 V468 H1006 V445.2 H1014.2 V440 V445.2 H1014.2 V462.5 H1021.5 V448 H1029.3 V440 V448 H1029.3 V458 L1037.5 468 H1057.9 V448 H1067 V439 V448 H1067 V461.6 H1074.8 V432 V461.6 H1074.8 V448 H1085.8 V465.3 H1094 V471.3 H1097.6 V471.3" fill="none" stroke="#1c9ddc" stroke-width="1.6" stroke-linejoin="miter"/>
<path d="M321.8 555.6 L321.8 526 H404.3 V555.5 H440.2 V526 H449.5 V555.5 H474.4 V513 V555.5 H527.3 V529 L530 527 H544.6 V555.5 H623.5 V533 V555.5 H645.2 V505.5 V555.5 H678.1 V510 V555.5 H688.9 V504 V555.5 H724.2 V512 V555.5 H733.3 V504.5 V555.5 H758.3 V511 V555.5 H843 V511 V555.5 H865.8 V514 V555.5 H875.4 V514 V555.5 H901.8 V512 V555.5 H912.2 V528 V555.5 H912.2 V537 H922.8 V555.5 H955.5 V527 V555.5 H955.5 V537 H965.2 V555.5 H988.3 V531 V555.5 H988.3 V538 H999.3 V555.5 H1022.4 V535 V555.5 H1097.6 V555.5 H1097.6 V555.6 Z" fill="#2f4d5b"/><path d="M321.8 526 H404.3 V555.5 H440.2 V526 H449.5 V555.5 H474.4 V513 V555.5 H527.3 V529 L530 527 H544.6 V555.5 H623.5 V533 V555.5 H645.2 V505.5 V555.5 H678.1 V510 V555.5 H688.9 V504 V555.5 H724.2 V512 V555.5 H733.3 V504.5 V555.5 H758.3 V511 V555.5 H843 V511 V555.5 H865.8 V514 V555.5 H875.4 V514 V555.5 H901.8 V512 V555.5 H912.2 V528 V555.5 H912.2 V537 H922.8 V555.5 H955.5 V527 V555.5 H955.5 V537 H965.2 V555.5 H988.3 V531 V555.5 H988.3 V538 H999.3 V555.5 H1022.4 V535 V555.5 H1097.6 V555.5" fill="none" stroke="#1c9ddc" stroke-width="1.6" stroke-linejoin="miter"/>
<path d="M321.8 635.8 L321.8 590 H404.3 V594 H433 V584.5 H440.2 V590 H449.5 V594 H473.5 V590 H474.5 V599 V590 H475.3 V635.5 H527.3 V589.5 H544.6 V594.5 H560.5 V607.5 H570.1 V614 V607.5 H570.1 V599 H579.2 V607.5 H591 V610 V607.5 H591 V594.5 H600.2 V607 H611.1 V614 V607 H611.1 V600 H623.9 V607 H634.8 V610 V607 H634.8 V594.5 H645.2 V602 V594.5 H645.2 V596 H677.6 V593.5 H688.9 V596.5 H724 V593 H733 V603 V593 H733 V596 H758 V593 H769 V607 H778.3 V610 V607 H778.3 V594 H786.5 V607 H795 V614 V607 H795 V605 H803.3 V608 H811.1 V594 H833 V593 H843 V589 H865.8 V596 V589 H865.8 V592 H875.4 V596 V592 H875.4 V589.5 H901.8 V596 V589.5 H901.8 V591.5 L915.5 603 H922.8 V610 V603 H922.8 V593 H933.3 V606 H941.5 V611 V606 H941.5 V592 H956.5 V603 H965.2 V610 V603 H965.2 V592 H973.5 V594.5 H989.2 V603 H999.3 V594.5 H1007 V607 H1014.5 V614 V607 H1014.5 V599 H1022.4 V607 H1029.3 V611 V607 H1029.3 V594 H1057 V607 H1066 V613 V607 H1066 V597.5 H1075.8 V607 H1086 V610 V607 H1086 V594.5 H1095.5 V585 H1097.6 V585 H1097.6 V635.8 Z" fill="#2f4d5b"/><path d="M321.8 590 H404.3 V594 H433 V584.5 H440.2 V590 H449.5 V594 H473.5 V590 H474.5 V599 V590 H475.3 V635.5 H527.3 V589.5 H544.6 V594.5 H560.5 V607.5 H570.1 V614 V607.5 H570.1 V599 H579.2 V607.5 H591 V610 V607.5 H591 V594.5 H600.2 V607 H611.1 V614 V607 H611.1 V600 H623.9 V607 H634.8 V610 V607 H634.8 V594.5 H645.2 V602 V594.5 H645.2 V596 H677.6 V593.5 H688.9 V596.5 H724 V593 H733 V603 V593 H733 V596 H758 V593 H769 V607 H778.3 V610 V607 H778.3 V594 H786.5 V607 H795 V614 V607 H795 V605 H803.3 V608 H811.1 V594 H833 V593 H843 V589 H865.8 V596 V589 H865.8 V592 H875.4 V596 V592 H875.4 V589.5 H901.8 V596 V589.5 H901.8 V591.5 L915.5 603 H922.8 V610 V603 H922.8 V593 H933.3 V606 H941.5 V611 V606 H941.5 V592 H956.5 V603 H965.2 V610 V603 H965.2 V592 H973.5 V594.5 H989.2 V603 H999.3 V594.5 H1007 V607 H1014.5 V614 V607 H1014.5 V599 H1022.4 V607 H1029.3 V611 V607 H1029.3 V594 H1057 V607 H1066 V613 V607 H1066 V597.5 H1075.8 V607 H1086 V610 V607 H1086 V594.5 H1095.5 V585 H1097.6 V585" fill="none" stroke="#1c9ddc" stroke-width="1.6" stroke-linejoin="miter"/>
<path d="M321.8 715.9 L321.8 690.5 H404.6 V700 H433 V686 H440.5 V690.5 H449.5 V700 H475.5 V715.6 H527.5 V690.5 H544.8 V700 H560.8 V707.5 H570.5 V698 H579.6 V707.5 H591 V700 H600.4 V706.5 H611.3 V691 H623.5 V707 H634.8 V700 H645.2 V665.5 H678.5 V700 H688.4 V665.5 H724.5 V700 H733.5 V665.5 H758.5 V700 H769.3 V707.5 H778.3 V700 H786.5 V707.5 H794.5 V702 H803.5 V707.5 H811.2 V700 H833.5 V704.5 H843 V665.5 H865.8 V704.5 H875.5 V665.5 H902 V704.5 H912.5 V706 H922.8 V704 H933 V707.5 H941.5 V704 H956.5 V705.5 H965.5 V704 H989 V705.5 H999 V704 H1007.5 V707.5 H1014 V694 H1022.5 V708 H1029.5 V704 H1058 V707.5 H1066.5 V698 H1075.5 V707.5 H1086 V704 H1094 V689 H1097.6 V689 H1097.6 V715.9 Z" fill="#2f4d5b"/><path d="M321.8 690.5 H404.6 V700 H433 V686 H440.5 V690.5 H449.5 V700 H475.5 V715.6 H527.5 V690.5 H544.8 V700 H560.8 V707.5 H570.5 V698 H579.6 V707.5 H591 V700 H600.4 V706.5 H611.3 V691 H623.5 V707 H634.8 V700 H645.2 V665.5 H678.5 V700 H688.4 V665.5 H724.5 V700 H733.5 V665.5 H758.5 V700 H769.3 V707.5 H778.3 V700 H786.5 V707.5 H794.5 V702 H803.5 V707.5 H811.2 V700 H833.5 V704.5 H843 V665.5 H865.8 V704.5 H875.5 V665.5 H902 V704.5 H912.5 V706 H922.8 V704 H933 V707.5 H941.5 V704 H956.5 V705.5 H965.5 V704 H989 V705.5 H999 V704 H1007.5 V707.5 H1014 V694 H1022.5 V708 H1029.5 V704 H1058 V707.5 H1066.5 V698 H1075.5 V707.5 H1086 V704 H1094 V689 H1097.6 V689" fill="none" stroke="#1c9ddc" stroke-width="1.6" stroke-linejoin="miter"/>
<path d="M321.8 796.1 L321.8 766.5 H404.6 V760 H433 V777 H440.5 V766.5 H449.5 V760 H474.5 V745.5 V760 H475.5 V796 H527.5 V766 H544.8 V760 H560.8 V783.5 H569.6 V765 V783.5 H579.3 V753 V783.5 H580 V760 H590.8 V783.5 H610.9 V765 V783.5 H611.3 V786 H623 V755 V786 H623.5 V783.5 H634.8 V760 H645 V794 H676 V759 H688.4 V794 H724 V759 H733.5 V794 H758.5 V759 H769.3 V794 H778.5 V759 H786.6 V794 H794.4 V765 V794 H803 V753 V794 H803 V783.5 H811 V759 H833.5 V755 H843 V794 H865.8 V755 H875.5 V794 H902 V755 H912 V785 H922.3 V755 H932.9 V782.5 H942 V755 H956.5 V785 H965.5 V755 H972.5 V756 H989 V785 H999.5 V756 H1006.5 V782.5 H1013.5 V765 V782.5 H1013.5 V786 H1021.5 V755 V786 H1021.5 V782.5 H1029.5 V756 L1040 753 H1057.5 V783 H1065.5 V765 V783 H1065.5 V784.5 H1075.5 V754 V784.5 H1075.5 V783 H1086 V753 H1094.5 V774 H1097.6 V774 H1097.6 V796.1 Z" fill="#2f4d5b"/><path d="M321.8 766.5 H404.6 V760 H433 V777 H440.5 V766.5 H449.5 V760 H474.5 V745.5 V760 H475.5 V796 H527.5 V766 H544.8 V760 H560.8 V783.5 H569.6 V765 V783.5 H579.3 V753 V783.5 H580 V760 H590.8 V783.5 H610.9 V765 V783.5 H611.3 V786 H623 V755 V786 H623.5 V783.5 H634.8 V760 H645 V794 H676 V759 H688.4 V794 H724 V759 H733.5 V794 H758.5 V759 H769.3 V794 H778.5 V759 H786.6 V794 H794.4 V765 V794 H803 V753 V794 H803 V783.5 H811 V759 H833.5 V755 H843 V794 H865.8 V755 H875.5 V794 H902 V755 H912 V785 H922.3 V755 H932.9 V782.5 H942 V755 H956.5 V785 H965.5 V755 H972.5 V756 H989 V785 H999.5 V756 H1006.5 V782.5 H1013.5 V765 V782.5 H1013.5 V786 H1021.5 V755 V786 H1021.5 V782.5 H1029.5 V756 L1040 753 H1057.5 V783 H1065.5 V765 V783 H1065.5 V784.5 H1075.5 V754 V784.5 H1075.5 V783 H1086 V753 H1094.5 V774 H1097.6 V774" fill="none" stroke="#1c9ddc" stroke-width="1.6" stroke-linejoin="miter"/>
</svg>
<div class="t" style="left:298.6px;top:171.2px;font-size:9.6px;color:#e8e8e8;">Impact Time</div>
<div class="t" style="left:733.5px;top:171.2px;width:400px;text-align:right;font-size:9.6px;color:#e8e8e8;">1.42 seconds</div>
<div class="a" style="left:509.2px;top:170.0px;width:42.4px;height:14px;border:1px solid #d8d8d8;border-radius:7px"></div>
<div class="t" style="left:509.2px;top:172.3px;width:42.4px;text-align:center;font-size:9.6px;color:#f2f2f2">1.42</div>
<div class="t" style="left:298.6px;top:251.4px;font-size:9.6px;color:#e8e8e8;">Impact Count</div>
<div class="t" style="left:733.5px;top:251.4px;width:400px;text-align:right;font-size:9.6px;color:#e8e8e8;">3 impacts</div>
<div class="a" style="left:509.2px;top:250.2px;width:42.4px;height:14px;border:1px solid #d8d8d8;border-radius:7px"></div>
<div class="t" style="left:509.2px;top:252.5px;width:42.4px;text-align:center;font-size:9.6px;color:#f2f2f2">1</div>
<div class="t" style="left:298.6px;top:331.5px;font-size:9.6px;color:#e8e8e8;">Video Quality MOS</div>
<div class="t" style="left:733.5px;top:331.5px;width:400px;text-align:right;font-size:9.6px;color:#e8e8e8;">4.67 HeadSpin MOS</div>
<div class="a" style="left:509.2px;top:330.3px;width:42.4px;height:14px;border:1px solid #d8d8d8;border-radius:7px"></div>
<div class="t" style="left:509.2px;top:332.6px;width:42.4px;text-align:center;font-size:9.6px;color:#f2f2f2">4.11</div>
<div class="t" style="left:298.6px;top:411.7px;font-size:9.6px;color:#e8e8e8;">Blurriness</div>
<div class="t" style="left:733.5px;top:411.7px;width:400px;text-align:right;font-size:9.6px;color:#e8e8e8;">0.35 blurriness</div>
<div class="a" style="left:509.2px;top:410.5px;width:42.4px;height:14px;border:1px solid #d8d8d8;border-radius:7px"></div>
<div class="t" style="left:509.2px;top:412.8px;width:42.4px;text-align:center;font-size:9.6px;color:#f2f2f2">0.24</div>
<div class="t" style="left:298.6px;top:491.9px;font-size:9.6px;color:#e8e8e8;">Blockiness</div>
<div class="t" style="left:733.5px;top:491.9px;width:400px;text-align:right;font-size:9.6px;color:#e8e8e8;">0.44 blockiness</div>
<div class="a" style="left:509.2px;top:490.7px;width:42.4px;height:14px;border:1px solid #d8d8d8;border-radius:7px"></div>
<div class="t" style="left:509.2px;top:493.0px;width:42.4px;text-align:center;font-size:9.6px;color:#f2f2f2">0.25</div>
<div class="t" style="left:298.6px;top:572.0px;font-size:9.6px;color:#e8e8e8;">Contrast</div>
<div class="t" style="left:733.5px;top:572.0px;width:400px;text-align:right;font-size:9.6px;color:#e8e8e8;">0.9 contrast</div>
<div class="a" style="left:509.2px;top:570.8px;width:42.4px;height:14px;border:1px solid #d8d8d8;border-radius:7px"></div>
<div class="t" style="left:509.2px;top:573.1px;width:42.4px;text-align:center;font-size:9.6px;color:#f2f2f2">0.81</div>
<div class="t" style="left:298.6px;top:652.2px;font-size:9.6px;color:#e8e8e8;">Brightness</div>
<div class="t" style="left:733.5px;top:652.2px;width:400px;text-align:right;font-size:9.6px;color:#e8e8e8;">0.83 brightness</div>
<div class="a" style="left:509.2px;top:651.0px;width:42.4px;height:14px;border:1px solid #d8d8d8;border-radius:7px"></div>
<div class="t" style="left:509.2px;top:653.3px;width:42.4px;text-align:center;font-size:9.6px;color:#f2f2f2">0.42</div>
<div class="t" style="left:298.6px;top:732.4px;font-size:9.6px;color:#e8e8e8;">Colorfulness</div>
<div class="t" style="left:733.5px;top:732.4px;width:400px;text-align:right;font-size:9.6px;color:#e8e8e8;">0.11 colorfulness</div>
<div class="a" style="left:509.2px;top:731.2px;width:42.4px;height:14px;border:1px solid #d8d8d8;border-radius:7px"></div>
<div class="t" style="left:509.2px;top:733.5px;width:42.4px;text-align:center;font-size:9.6px;color:#f2f2f2">0.06</div>
<div class="a" style="left:441.0px;top:333.2px;width:34.0px;height:8.8px;border-radius:4.4px;background:#c97b37"></div>
<div class="a" style="left:760.0px;top:333.2px;width:49.8px;height:8.8px;border-radius:4.4px;background:#c97b37"></div>
<div class="a" style="left:933.3px;top:333.2px;width:80.9px;height:8.8px;border-radius:4.4px;background:#c97b37"></div>
<div class="a" style="left:295px;top:160px;width:843px;height:18.4px;background:#3c3c3c;border-bottom:1px solid #343434"></div>
<div class="a" style="left:295px;top:146px;width:1px;height:655px;background:#555"></div>
<div class="a" style="left:530px;top:160px;width:1px;height:641px;background:rgba(235,235,235,.55)"></div>
<div class="a" style="left:529.8px;top:184.7px;width:1.4px;height:50.2px;background:#e98a2a"></div>
<div class="a" style="left:529.8px;top:264.9px;width:1.4px;height:50.2px;background:#e98a2a"></div>
<div class="a" style="left:530px;top:505.4px;width:1px;height:21.6px;background:#4fa9dc"></div>
<div class="a" style="left:530px;top:665.7px;width:1px;height:24.8px;background:#4fa9dc"></div>
<div class="a" style="left:530px;top:745.9px;width:1px;height:20.1px;background:#4fa9dc"></div>
<div class="a" style="left:295px;top:146px;width:843px;height:1.6px;background:#2b2b2b"></div>
<div class="a" style="left:295px;top:146px;width:802.6px;height:1.2px;background:#b96a2c"></div>
<div class="a" style="left:295px;top:147.6px;width:843px;height:13px;background:#2c2c2c"></div>
<div class="t" style="left:297.5px;top:150.3px;font-size:8.7px;color:#d2d2d2;">0ms</div>
<div class="a" style="left:352.0px;top:147.6px;width:1px;height:13px;background:#4e4e4e"></div>
<div class="t" style="left:354.0px;top:150.3px;font-size:8.7px;color:#d2d2d2;">10s</div>
<div class="a" style="left:408.0px;top:147.6px;width:1px;height:13px;background:#4e4e4e"></div>
<div class="t" style="left:410.5px;top:150.3px;font-size:8.7px;color:#d2d2d2;">20s</div>
<div class="a" style="left:465.0px;top:147.6px;width:1px;height:13px;background:#4e4e4e"></div>
<div class="t" style="left:467.0px;top:150.3px;font-size:8.7px;color:#d2d2d2;">30s</div>
<div class="a" style="left:521.0px;top:147.6px;width:1px;height:13px;background:#4e4e4e"></div>
<div class="t" style="left:523.5px;top:150.3px;font-size:8.7px;color:#d2d2d2;">40s</div>
<div class="a" style="left:578.0px;top:147.6px;width:1px;height:13px;background:#4e4e4e"></div>
<div class="t" style="left:580.0px;top:150.3px;font-size:8.7px;color:#d2d2d2;">50s</div>
<div class="a" style="left:634.0px;top:147.6px;width:1px;height:13px;background:#4e4e4e"></div>
<div class="t" style="left:636.5px;top:150.3px;font-size:8.7px;color:#d2d2d2;">1m</div>
<div class="a" style="left:691.0px;top:147.6px;width:1px;height:13px;background:#4e4e4e"></div>
<div class="t" style="left:693.0px;top:150.3px;font-size:8.7px;color:#d2d2d2;">1m 10s</div>
<div class="a" style="left:747.0px;top:147.6px;width:1px;height:13px;background:#4e4e4e"></div>
<div class="t" style="left:749.5px;top:150.3px;font-size:8.7px;color:#d2d2d2;">1m 20s</div>
<div class="a" style="left:804.0px;top:147.6px;width:1px;height:13px;background:#4e4e4e"></div>
<div class="t" style="left:806.0px;top:150.3px;font-size:8.7px;color:#d2d2d2;">1m 30s</div>
<div class="a" style="left:860.0px;top:147.6px;width:1px;height:13px;background:#4e4e4e"></div>
<div class="t" style="left:862.5px;top:150.3px;font-size:8.7px;color:#d2d2d2;">1m 40s</div>
<div class="a" style="left:917.0px;top:147.6px;width:1px;height:13px;background:#4e4e4e"></div>
<div class="t" style="left:919.0px;top:150.3px;font-size:8.7px;color:#d2d2d2;">1m 50s</div>
<div class="a" style="left:973.0px;top:147.6px;width:1px;height:13px;background:#4e4e4e"></div>
<div class="t" style="left:975.5px;top:150.3px;font-size:8.7px;color:#d2d2d2;">2m</div>
<div class="a" style="left:1030.0px;top:147.6px;width:1px;height:13px;background:#4e4e4e"></div>
<div class="t" style="left:1032.0px;top:150.3px;font-size:8.7px;color:#d2d2d2;">2m 10s</div>
<div class="a" style="left:1086.0px;top:147.6px;width:1px;height:13px;background:#4e4e4e"></div>
<div class="t" style="left:1088.5px;top:150.3px;font-size:8.7px;color:#d2d2d2;">2m 20s</div>
<svg class="a" style="left:522px;top:147px" width="17" height="14" viewBox="0 0 17 14"><path d="M2.5 0.5 H14.5 L8.5 13 Z" fill="#f26a2e"/></svg>
<div class="a" style="left:662px;top:771px;width:145px;height:30px;border-radius:4px 4px 0 0;background:#2d2d2d"></div>
<div class="t" style="left:673.5px;top:780.6px;font-size:11.8px;color:#f5f5f5;font-weight:bold;letter-spacing:-0.35px">Compare Sessions</div>
<div class="a" style="left:781.4px;top:778.6px;width:14.4px;height:14.4px;border-radius:50%;background:#1697db"></div>
<div class="t" style="left:781.4px;top:781.7px;width:14.4px;text-align:center;font-size:9px;color:#fff">0</div>

<!-- right panel -->
<div class="a" style="left:1137.6px;top:121px;width:291.4px;height:292px;background:#4e5153"></div>
<div class="a" style="left:1137px;top:121px;width:1px;height:680px;background:#2e2e2e"></div>
<!-- device screenshot -->
<div class="a" style="left:1156px;top:209.3px;width:254.7px;height:115px;background:#0d1020"></div>
<div class="a" style="left:1173px;top:218px;width:214px;height:100px;background:#111c45"></div>
<div class="a" style="left:1173px;top:317.8px;width:214px;height:6.4px;background:#5b5d64"></div>
<div class="t" style="left:1160px;top:210.5px;font-size:5px;color:#9aa;letter-spacing:1.2px">12:00 ▪ ▪ ▪ ▪ ▪ ▪ ▪</div>
<div class="t" style="left:1360px;top:210.5px;font-size:5px;color:#9aa">◂ ▪ 100%▮</div>
<div class="t" style="left:1196px;top:219.6px;font-size:15.4px;color:#2a9fd8">Select Vehicle Insurance</div>
<div class="a" style="left:1177px;top:240.7px;width:63.4px;height:64.3px;border-radius:3.5px;background:linear-gradient(#d9dadd,#f7f8f9 45%,#f2f3f4 70%,#d6d7da)"></div>
<div class="a" style="left:1248px;top:240.7px;width:63.5px;height:64.3px;border-radius:3.5px;background:linear-gradient(#d9dadd,#f7f8f9 45%,#f2f3f4 70%,#d6d7da)"></div>
<div class="a" style="left:1319.5px;top:240.7px;width:63.5px;height:64.3px;border-radius:3.5px;background:linear-gradient(#d9dadd,#f7f8f9 45%,#f2f3f4 70%,#d6d7da)"></div>
<div class="t" style="left:1177px;top:249.5px;width:63.4px;text-align:center;font-size:4.6px;color:#555">Car</div>
<div class="t" style="left:1248px;top:249.5px;width:63.5px;text-align:center;font-size:4.6px;color:#555">Motorcycle</div>
<div class="t" style="left:1319.5px;top:249.5px;width:63.5px;text-align:center;font-size:4.6px;color:#555">Truck</div>
<svg class="a" style="left:1177px;top:240px" width="210" height="66" viewBox="1177 240 210 66">
 <!-- car -->
 <ellipse cx="1210" cy="295" rx="21" ry="3.4" fill="#8f9092" opacity=".35"/>
 <path d="M1190 291 L1190.5 281 Q1192 276 1199 274 L1203.5 267 Q1212 265 1221 267 L1225.5 274 Q1227 281 1226 291 L1223 294 L1192 294 Z" fill="#f2f2f3" stroke="#a4a6a9" stroke-width="0.6"/>
 <path d="M1201.5 273.8 L1205 267.8 L1219.4 267.8 L1222.6 273.8 Z" fill="#8d9095"/>
 <path d="M1205 267.8 L1219.4 267.8 L1218 270.5 L1206 270.5 Z" fill="#4a4c52"/>
 <path d="M1223 274 L1226 281 L1226 289 L1223 290 Z" fill="#cfd0d2"/>
 <rect x="1196.5" y="279.4" width="9" height="2.2" fill="#3a3b3f"/>
 <circle cx="1193.6" cy="278.8" r="1.5" fill="#a9abae"/><circle cx="1209.4" cy="279" r="1.6" fill="#a9abae"/><circle cx="1213.6" cy="279" r="1.6" fill="#a9abae"/>
 <rect x="1192" y="286.4" width="26" height="3.2" rx="1" fill="#3a3b3f"/>
 <rect x="1194" y="292" width="3" height="2.4" fill="#2a2a2a"/><rect x="1220" y="287" width="3.2" height="6.6" rx="1.4" fill="#2a2a2a"/>
 <!-- motorcycle -->
 <ellipse cx="1279" cy="298" rx="18" ry="2.6" fill="#8f9092" opacity=".35"/>
 <circle cx="1266" cy="290.5" r="5.2" fill="#e2e2e3" stroke="#2a2b2e" stroke-width="2.2"/>
 <circle cx="1290" cy="292.2" r="5.6" fill="#e2e2e3" stroke="#2a2b2e" stroke-width="2.2"/>
 <circle cx="1290" cy="292.2" r="2.2" fill="#8b8c8f"/><circle cx="1266" cy="290.5" r="2" fill="#8b8c8f"/>
 <path d="M1262 275 L1271 269 L1280 270.5 L1287 267 L1293 272 L1295 283 L1291 287 L1281 293 L1271 290 L1266 283 Z" fill="#f4f4f5" stroke="#a8aaad" stroke-width="0.5"/>
 <path d="M1262 274 L1268.5 269.5 L1272.5 273 L1270 280 L1265 282 Z" fill="#55575c"/>
 <path d="M1272 280 L1277 277 L1279 285 L1274 288 Z" fill="#6f7176"/>
 <path d="M1283 276 L1288 273 L1289.5 279 L1285 282 Z" fill="#b2b4b7"/>
 <path d="M1287.5 264.5 L1291.5 263.5 L1294 270.5 Z" fill="#e9e9ea" stroke="#b5b7ba" stroke-width=".5"/>
 <!-- truck -->
 <ellipse cx="1352" cy="296.5" rx="18" ry="2.8" fill="#8f9092" opacity=".35"/>
 <path d="M1334.5 270 L1347 264.6 L1349.5 266 L1349.5 294 L1336 290.5 Z" fill="#eceded" stroke="#b9bbbd" stroke-width="0.5"/>
 <path d="M1347 265 L1364 266.5 L1367 271 L1367.5 293.5 L1364 296 L1350 295.5 L1349 266 Z" fill="#f7f7f8" stroke="#a9abae" stroke-width="0.5"/>
 <path d="M1350.5 271 L1365.5 271 L1365 278.5 L1351.5 279 Z" fill="#2c2d31"/>
 <rect x="1360.5" y="272" width="3.4" height="3.6" fill="#f2f2f2"/>
 <rect x="1352" y="283" width="13" height="1.2" fill="#8e8f92"/><rect x="1352" y="285.6" width="13" height="1.2" fill="#8e8f92"/><rect x="1352" y="288.2" width="13" height="1.2" fill="#8e8f92"/>
 <circle cx="1341" cy="292" r="2.4" fill="#2a2a2a"/><circle cx="1353.5" cy="294.8" r="1.8" fill="#3a3a3a"/><circle cx="1362" cy="294.8" r="1.8" fill="#3a3a3a"/>
</svg>
<div class="a" style="left:1258px;top:310.5px;width:6px;height:6px;background:#e9e9e9"></div>
<div class="t" style="left:1283px;top:311.4px;font-size:5.2px;color:#dfe3ee">12.160.100.120</div>
<div class="t" style="left:1190px;top:319.5px;font-size:3.8px;color:#e8e8e8;letter-spacing:0.3px;word-spacing:14px">Home Vehicle Driver Product&nbsp;Details Quote</div>
<div class="t" style="left:1400.5px;top:229px;font-size:7px;color:#bbb">&lsaquo;</div>
<div class="a" style="left:1400.5px;top:263.5px;width:4.6px;height:4.6px;border:1px solid #bbb;border-radius:1px"></div>
<div class="a" style="left:1403.2px;top:294.5px;width:1px;height:6px;background:#aaa;box-shadow:2px 0 0 #aaa"></div>

<!-- details -->
<div class="a" style="left:1137.6px;top:413px;width:291.4px;height:35.5px;background:#3b3b3b"></div>
<div class="t" style="left:1144.7px;top:425.8px;font-size:11.5px;color:#f3f3f3">Details</div>
<div class="a" style="left:1365px;top:420.2px;width:34px;height:21.2px;border-radius:3.5px;background:#1194d9"></div>
<div class="t" style="left:1365px;top:425.8px;width:34px;text-align:center;font-size:10px;color:#fff">Clear</div>
<svg class="a" style="left:1406px;top:422.5px" width="16" height="16" viewBox="0 0 16 16"><path d="M2 1.8 L13.6 13.4 M13.6 1.8 L2 13.4" stroke="#f0f0f0" stroke-width="1.4"/></svg>
<div class="a" style="left:1137.6px;top:448.5px;width:291.4px;height:352.5px;background:#ecedf1"></div>
<div class="t" style="left:1137.6px;top:523.2px;width:291.4px;text-align:center;font-size:11.5px;color:#747474;line-height:16.2px;white-space:normal">Click connections, messages and labels to view<br>their details here.</div>
<svg class="a" style="left:1260.5px;top:593px" width="46" height="33" viewBox="0 0 46 33">
 <path d="M34 6 H36 A8.2 8.2 0 0 1 36 22.4 H6" fill="none" stroke="#bdbdbd" stroke-width="3.4"/>
 <path d="M13 15 L5.5 22.4 L13 29.8" fill="none" stroke="#bdbdbd" stroke-width="3.4"/>
 <path d="M24 6 H36" stroke="#bdbdbd" stroke-width="3.4"/>
</svg>


</div>
</div>
</body></html>
